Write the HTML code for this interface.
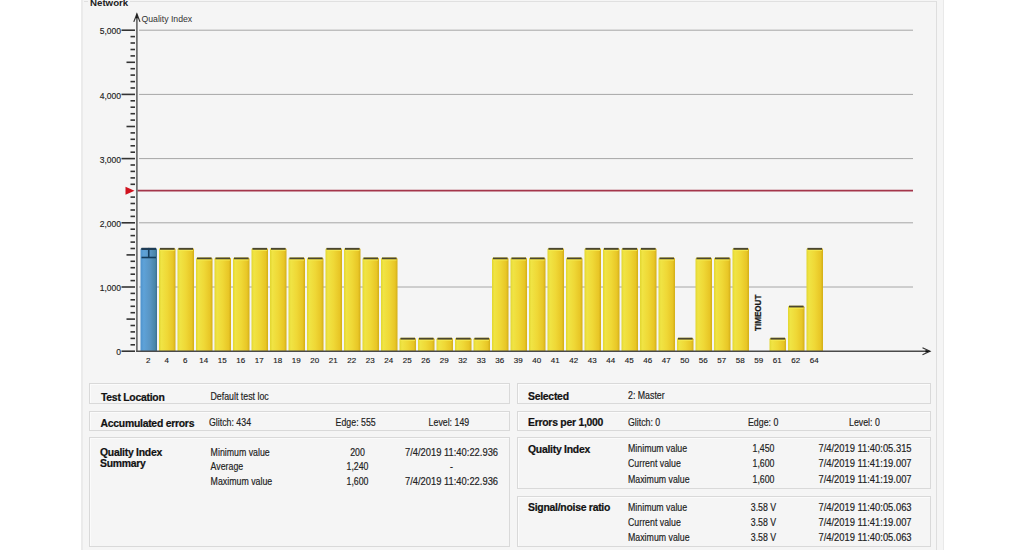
<!DOCTYPE html>
<html><head><meta charset="utf-8"><style>
html,body{margin:0;padding:0;background:#fff;}
body{width:1024px;height:550px;overflow:hidden;position:relative;font-family:"Liberation Sans",sans-serif;}
.panel{position:absolute;left:81px;top:-10px;width:863px;height:600px;background:#f5f5f5;border-left:2px solid #ebebeb;border-right:1px solid #e9e9e9;box-sizing:border-box;}
.hline{position:absolute;left:84px;top:1px;width:853px;height:1px;background:#e0e0e0;}
.vline{position:absolute;left:936px;top:1px;width:1px;height:560px;background:#dedede;}
.net{position:absolute;left:88px;top:-3px;padding:0 2px;background:#f5f5f5;font-weight:bold;font-size:9.7px;color:#222;line-height:12px;}
svg{position:absolute;left:0;top:0;}
.yl{font-size:9.7px;fill:#222;stroke:#222;stroke-width:0.15px;}
.xl{font-size:8px;fill:#222;stroke:#222;stroke-width:0.15px;}
.qi{font-size:8.7px;fill:#333;}
.to{font-size:9px;font-weight:bold;fill:#1a1a1a;stroke:#1a1a1a;stroke-width:0.25px;}
.box{position:absolute;box-sizing:border-box;border:1px solid #d9d9d9;box-shadow:inset 1px 1px 0 #fbfbfb;}
.t{position:absolute;white-space:nowrap;line-height:0;color:#222;}
.t.n{font-size:8.8px;-webkit-text-stroke:0.15px #222;transform:scaleY(1.15);transform-origin:0 3.05px;}
.t.d{font-size:9.4px;-webkit-text-stroke:0.15px #222;transform:scaleY(1.08);transform-origin:0 3.26px;}
.t.b{font-size:10.4px;font-weight:bold;color:#111;letter-spacing:-0.25px;-webkit-text-stroke:0.2px #111;}
.t.c{width:200px;text-align:center;}
</style></head><body>
<div class="panel"></div>
<div class="hline"></div>
<div class="vline"></div>
<div class="net">Network</div>
<svg width="1024" height="550" viewBox="0 0 1024 550">
<defs><linearGradient id="gy" x1="0" x2="1" y1="0" y2="0"><stop offset="0" stop-color="#e2d630"/><stop offset="0.15" stop-color="#f0e444"/><stop offset="0.5" stop-color="#efd836"/><stop offset="0.85" stop-color="#e8c626"/><stop offset="1" stop-color="#d2ae18"/></linearGradient><linearGradient id="gb" x1="0" x2="1" y1="0" y2="0"><stop offset="0" stop-color="#4e92cc"/><stop offset="0.2" stop-color="#5ea2d8"/><stop offset="0.6" stop-color="#5894c2"/><stop offset="0.88" stop-color="#4a86a8"/><stop offset="1" stop-color="#3c6e90"/></linearGradient></defs>
<line x1="139" x2="913" y1="287.0" y2="287.0" stroke="#a6a6a6" stroke-width="1"/>
<line x1="139" x2="913" y1="222.8" y2="222.8" stroke="#a6a6a6" stroke-width="1"/>
<line x1="139" x2="913" y1="158.6" y2="158.6" stroke="#a6a6a6" stroke-width="1"/>
<line x1="139" x2="913" y1="94.4" y2="94.4" stroke="#a6a6a6" stroke-width="1"/>
<line x1="139" x2="913" y1="30.2" y2="30.2" stroke="#a6a6a6" stroke-width="1"/>
<line x1="137.5" x2="913" y1="190.7" y2="190.7" stroke="#a4354a" stroke-width="1.8"/>
<polygon points="125.5,186.7 134.5,190.7 125.5,194.7" fill="#d0121e"/>
<line x1="121.5" x2="135" y1="351.2" y2="351.2" stroke="#333" stroke-width="1.6"/>
<line x1="130.5" x2="135" y1="344.8" y2="344.8" stroke="#333" stroke-width="1.6"/>
<line x1="130.5" x2="135" y1="338.4" y2="338.4" stroke="#333" stroke-width="1.6"/>
<line x1="130.5" x2="135" y1="331.9" y2="331.9" stroke="#333" stroke-width="1.6"/>
<line x1="130.5" x2="135" y1="325.5" y2="325.5" stroke="#333" stroke-width="1.6"/>
<line x1="126.5" x2="135" y1="319.1" y2="319.1" stroke="#333" stroke-width="1.6"/>
<line x1="130.5" x2="135" y1="312.7" y2="312.7" stroke="#333" stroke-width="1.6"/>
<line x1="130.5" x2="135" y1="306.3" y2="306.3" stroke="#333" stroke-width="1.6"/>
<line x1="130.5" x2="135" y1="299.8" y2="299.8" stroke="#333" stroke-width="1.6"/>
<line x1="130.5" x2="135" y1="293.4" y2="293.4" stroke="#333" stroke-width="1.6"/>
<line x1="121.5" x2="135" y1="287.0" y2="287.0" stroke="#333" stroke-width="1.6"/>
<line x1="130.5" x2="135" y1="280.6" y2="280.6" stroke="#333" stroke-width="1.6"/>
<line x1="130.5" x2="135" y1="274.2" y2="274.2" stroke="#333" stroke-width="1.6"/>
<line x1="130.5" x2="135" y1="267.7" y2="267.7" stroke="#333" stroke-width="1.6"/>
<line x1="130.5" x2="135" y1="261.3" y2="261.3" stroke="#333" stroke-width="1.6"/>
<line x1="126.5" x2="135" y1="254.9" y2="254.9" stroke="#333" stroke-width="1.6"/>
<line x1="130.5" x2="135" y1="248.5" y2="248.5" stroke="#333" stroke-width="1.6"/>
<line x1="130.5" x2="135" y1="242.1" y2="242.1" stroke="#333" stroke-width="1.6"/>
<line x1="130.5" x2="135" y1="235.6" y2="235.6" stroke="#333" stroke-width="1.6"/>
<line x1="130.5" x2="135" y1="229.2" y2="229.2" stroke="#333" stroke-width="1.6"/>
<line x1="121.5" x2="135" y1="222.8" y2="222.8" stroke="#333" stroke-width="1.6"/>
<line x1="130.5" x2="135" y1="216.4" y2="216.4" stroke="#333" stroke-width="1.6"/>
<line x1="130.5" x2="135" y1="210.0" y2="210.0" stroke="#333" stroke-width="1.6"/>
<line x1="130.5" x2="135" y1="203.5" y2="203.5" stroke="#333" stroke-width="1.6"/>
<line x1="130.5" x2="135" y1="197.1" y2="197.1" stroke="#333" stroke-width="1.6"/>
<line x1="130.5" x2="135" y1="184.3" y2="184.3" stroke="#333" stroke-width="1.6"/>
<line x1="130.5" x2="135" y1="177.9" y2="177.9" stroke="#333" stroke-width="1.6"/>
<line x1="130.5" x2="135" y1="171.4" y2="171.4" stroke="#333" stroke-width="1.6"/>
<line x1="130.5" x2="135" y1="165.0" y2="165.0" stroke="#333" stroke-width="1.6"/>
<line x1="121.5" x2="135" y1="158.6" y2="158.6" stroke="#333" stroke-width="1.6"/>
<line x1="130.5" x2="135" y1="152.2" y2="152.2" stroke="#333" stroke-width="1.6"/>
<line x1="130.5" x2="135" y1="145.8" y2="145.8" stroke="#333" stroke-width="1.6"/>
<line x1="130.5" x2="135" y1="139.3" y2="139.3" stroke="#333" stroke-width="1.6"/>
<line x1="130.5" x2="135" y1="132.9" y2="132.9" stroke="#333" stroke-width="1.6"/>
<line x1="126.5" x2="135" y1="126.5" y2="126.5" stroke="#333" stroke-width="1.6"/>
<line x1="130.5" x2="135" y1="120.1" y2="120.1" stroke="#333" stroke-width="1.6"/>
<line x1="130.5" x2="135" y1="113.7" y2="113.7" stroke="#333" stroke-width="1.6"/>
<line x1="130.5" x2="135" y1="107.2" y2="107.2" stroke="#333" stroke-width="1.6"/>
<line x1="130.5" x2="135" y1="100.8" y2="100.8" stroke="#333" stroke-width="1.6"/>
<line x1="121.5" x2="135" y1="94.4" y2="94.4" stroke="#333" stroke-width="1.6"/>
<line x1="130.5" x2="135" y1="88.0" y2="88.0" stroke="#333" stroke-width="1.6"/>
<line x1="130.5" x2="135" y1="81.6" y2="81.6" stroke="#333" stroke-width="1.6"/>
<line x1="130.5" x2="135" y1="75.1" y2="75.1" stroke="#333" stroke-width="1.6"/>
<line x1="130.5" x2="135" y1="68.7" y2="68.7" stroke="#333" stroke-width="1.6"/>
<line x1="126.5" x2="135" y1="62.3" y2="62.3" stroke="#333" stroke-width="1.6"/>
<line x1="130.5" x2="135" y1="55.9" y2="55.9" stroke="#333" stroke-width="1.6"/>
<line x1="130.5" x2="135" y1="49.5" y2="49.5" stroke="#333" stroke-width="1.6"/>
<line x1="130.5" x2="135" y1="43.0" y2="43.0" stroke="#333" stroke-width="1.6"/>
<line x1="130.5" x2="135" y1="36.6" y2="36.6" stroke="#333" stroke-width="1.6"/>
<line x1="121.5" x2="135" y1="30.2" y2="30.2" stroke="#333" stroke-width="1.6"/>
<text transform="translate(121,355.4) scale(0.88,1)" text-anchor="end" class="yl">0</text>
<text transform="translate(121,291.2) scale(0.88,1)" text-anchor="end" class="yl">1,000</text>
<text transform="translate(121,227.0) scale(0.88,1)" text-anchor="end" class="yl">2,000</text>
<text transform="translate(121,162.8) scale(0.88,1)" text-anchor="end" class="yl">3,000</text>
<text transform="translate(121,98.6) scale(0.88,1)" text-anchor="end" class="yl">4,000</text>
<text transform="translate(121,34.4) scale(0.88,1)" text-anchor="end" class="yl">5,000</text>
<path d="M140.50,351.2 V249.38 Q140.50,247.88 142.00,247.88 H155.50 Q157.00,247.88 157.00,249.38 V351.2 Z" fill="url(#gb)"/>
<rect x="141.50" y="247.88" width="14.50" height="2" fill="#4a4630"/>
<text x="148.15" y="362.6" text-anchor="middle" class="xl">2</text>
<path d="M159.00,351.2 V249.38 Q159.00,247.88 160.50,247.88 H174.00 Q175.50,247.88 175.50,249.38 V351.2 Z" fill="url(#gy)"/>
<rect x="160.00" y="247.88" width="14.50" height="2" fill="#4a4630"/>
<rect x="160.00" y="249.88" width="14.50" height="1" fill="#f6ea50"/>
<text x="166.65" y="362.6" text-anchor="middle" class="xl">4</text>
<path d="M177.50,351.2 V249.38 Q177.50,247.88 179.00,247.88 H192.50 Q194.00,247.88 194.00,249.38 V351.2 Z" fill="url(#gy)"/>
<rect x="178.50" y="247.88" width="14.50" height="2" fill="#4a4630"/>
<rect x="178.50" y="249.88" width="14.50" height="1" fill="#f6ea50"/>
<text x="185.15" y="362.6" text-anchor="middle" class="xl">6</text>
<path d="M196.00,351.2 V259.01 Q196.00,257.51 197.50,257.51 H211.00 Q212.50,257.51 212.50,259.01 V351.2 Z" fill="url(#gy)"/>
<rect x="197.00" y="257.51" width="14.50" height="2" fill="#4a4630"/>
<rect x="197.00" y="259.51" width="14.50" height="1" fill="#f6ea50"/>
<text x="203.65" y="362.6" text-anchor="middle" class="xl">14</text>
<path d="M214.50,351.2 V259.01 Q214.50,257.51 216.00,257.51 H229.50 Q231.00,257.51 231.00,259.01 V351.2 Z" fill="url(#gy)"/>
<rect x="215.50" y="257.51" width="14.50" height="2" fill="#4a4630"/>
<rect x="215.50" y="259.51" width="14.50" height="1" fill="#f6ea50"/>
<text x="222.15" y="362.6" text-anchor="middle" class="xl">15</text>
<path d="M233.00,351.2 V259.01 Q233.00,257.51 234.50,257.51 H248.00 Q249.50,257.51 249.50,259.01 V351.2 Z" fill="url(#gy)"/>
<rect x="234.00" y="257.51" width="14.50" height="2" fill="#4a4630"/>
<rect x="234.00" y="259.51" width="14.50" height="1" fill="#f6ea50"/>
<text x="240.65" y="362.6" text-anchor="middle" class="xl">16</text>
<path d="M251.50,351.2 V249.38 Q251.50,247.88 253.00,247.88 H266.50 Q268.00,247.88 268.00,249.38 V351.2 Z" fill="url(#gy)"/>
<rect x="252.50" y="247.88" width="14.50" height="2" fill="#4a4630"/>
<rect x="252.50" y="249.88" width="14.50" height="1" fill="#f6ea50"/>
<text x="259.15" y="362.6" text-anchor="middle" class="xl">17</text>
<path d="M270.00,351.2 V249.38 Q270.00,247.88 271.50,247.88 H285.00 Q286.50,247.88 286.50,249.38 V351.2 Z" fill="url(#gy)"/>
<rect x="271.00" y="247.88" width="14.50" height="2" fill="#4a4630"/>
<rect x="271.00" y="249.88" width="14.50" height="1" fill="#f6ea50"/>
<text x="277.65" y="362.6" text-anchor="middle" class="xl">18</text>
<path d="M288.50,351.2 V259.01 Q288.50,257.51 290.00,257.51 H303.50 Q305.00,257.51 305.00,259.01 V351.2 Z" fill="url(#gy)"/>
<rect x="289.50" y="257.51" width="14.50" height="2" fill="#4a4630"/>
<rect x="289.50" y="259.51" width="14.50" height="1" fill="#f6ea50"/>
<text x="296.15" y="362.6" text-anchor="middle" class="xl">19</text>
<path d="M307.00,351.2 V259.01 Q307.00,257.51 308.50,257.51 H322.00 Q323.50,257.51 323.50,259.01 V351.2 Z" fill="url(#gy)"/>
<rect x="308.00" y="257.51" width="14.50" height="2" fill="#4a4630"/>
<rect x="308.00" y="259.51" width="14.50" height="1" fill="#f6ea50"/>
<text x="314.65" y="362.6" text-anchor="middle" class="xl">20</text>
<path d="M325.50,351.2 V249.38 Q325.50,247.88 327.00,247.88 H340.50 Q342.00,247.88 342.00,249.38 V351.2 Z" fill="url(#gy)"/>
<rect x="326.50" y="247.88" width="14.50" height="2" fill="#4a4630"/>
<rect x="326.50" y="249.88" width="14.50" height="1" fill="#f6ea50"/>
<text x="333.15" y="362.6" text-anchor="middle" class="xl">21</text>
<path d="M344.00,351.2 V249.38 Q344.00,247.88 345.50,247.88 H359.00 Q360.50,247.88 360.50,249.38 V351.2 Z" fill="url(#gy)"/>
<rect x="345.00" y="247.88" width="14.50" height="2" fill="#4a4630"/>
<rect x="345.00" y="249.88" width="14.50" height="1" fill="#f6ea50"/>
<text x="351.65" y="362.6" text-anchor="middle" class="xl">22</text>
<path d="M362.50,351.2 V259.01 Q362.50,257.51 364.00,257.51 H377.50 Q379.00,257.51 379.00,259.01 V351.2 Z" fill="url(#gy)"/>
<rect x="363.50" y="257.51" width="14.50" height="2" fill="#4a4630"/>
<rect x="363.50" y="259.51" width="14.50" height="1" fill="#f6ea50"/>
<text x="370.15" y="362.6" text-anchor="middle" class="xl">23</text>
<path d="M381.00,351.2 V259.01 Q381.00,257.51 382.50,257.51 H396.00 Q397.50,257.51 397.50,259.01 V351.2 Z" fill="url(#gy)"/>
<rect x="382.00" y="257.51" width="14.50" height="2" fill="#4a4630"/>
<rect x="382.00" y="259.51" width="14.50" height="1" fill="#f6ea50"/>
<text x="388.65" y="362.6" text-anchor="middle" class="xl">24</text>
<path d="M399.50,351.2 V339.26 Q399.50,337.76 401.00,337.76 H414.50 Q416.00,337.76 416.00,339.26 V351.2 Z" fill="url(#gy)"/>
<rect x="400.50" y="337.76" width="14.50" height="2" fill="#4a4630"/>
<rect x="400.50" y="339.76" width="14.50" height="1" fill="#f6ea50"/>
<text x="407.15" y="362.6" text-anchor="middle" class="xl">25</text>
<path d="M418.00,351.2 V339.26 Q418.00,337.76 419.50,337.76 H433.00 Q434.50,337.76 434.50,339.26 V351.2 Z" fill="url(#gy)"/>
<rect x="419.00" y="337.76" width="14.50" height="2" fill="#4a4630"/>
<rect x="419.00" y="339.76" width="14.50" height="1" fill="#f6ea50"/>
<text x="425.65" y="362.6" text-anchor="middle" class="xl">26</text>
<path d="M436.50,351.2 V339.26 Q436.50,337.76 438.00,337.76 H451.50 Q453.00,337.76 453.00,339.26 V351.2 Z" fill="url(#gy)"/>
<rect x="437.50" y="337.76" width="14.50" height="2" fill="#4a4630"/>
<rect x="437.50" y="339.76" width="14.50" height="1" fill="#f6ea50"/>
<text x="444.15" y="362.6" text-anchor="middle" class="xl">29</text>
<path d="M455.00,351.2 V339.26 Q455.00,337.76 456.50,337.76 H470.00 Q471.50,337.76 471.50,339.26 V351.2 Z" fill="url(#gy)"/>
<rect x="456.00" y="337.76" width="14.50" height="2" fill="#4a4630"/>
<rect x="456.00" y="339.76" width="14.50" height="1" fill="#f6ea50"/>
<text x="462.65" y="362.6" text-anchor="middle" class="xl">32</text>
<path d="M473.50,351.2 V339.26 Q473.50,337.76 475.00,337.76 H488.50 Q490.00,337.76 490.00,339.26 V351.2 Z" fill="url(#gy)"/>
<rect x="474.50" y="337.76" width="14.50" height="2" fill="#4a4630"/>
<rect x="474.50" y="339.76" width="14.50" height="1" fill="#f6ea50"/>
<text x="481.15" y="362.6" text-anchor="middle" class="xl">33</text>
<path d="M492.00,351.2 V259.01 Q492.00,257.51 493.50,257.51 H507.00 Q508.50,257.51 508.50,259.01 V351.2 Z" fill="url(#gy)"/>
<rect x="493.00" y="257.51" width="14.50" height="2" fill="#4a4630"/>
<rect x="493.00" y="259.51" width="14.50" height="1" fill="#f6ea50"/>
<text x="499.65" y="362.6" text-anchor="middle" class="xl">36</text>
<path d="M510.50,351.2 V259.01 Q510.50,257.51 512.00,257.51 H525.50 Q527.00,257.51 527.00,259.01 V351.2 Z" fill="url(#gy)"/>
<rect x="511.50" y="257.51" width="14.50" height="2" fill="#4a4630"/>
<rect x="511.50" y="259.51" width="14.50" height="1" fill="#f6ea50"/>
<text x="518.15" y="362.6" text-anchor="middle" class="xl">39</text>
<path d="M529.00,351.2 V259.01 Q529.00,257.51 530.50,257.51 H544.00 Q545.50,257.51 545.50,259.01 V351.2 Z" fill="url(#gy)"/>
<rect x="530.00" y="257.51" width="14.50" height="2" fill="#4a4630"/>
<rect x="530.00" y="259.51" width="14.50" height="1" fill="#f6ea50"/>
<text x="536.65" y="362.6" text-anchor="middle" class="xl">40</text>
<path d="M547.50,351.2 V249.38 Q547.50,247.88 549.00,247.88 H562.50 Q564.00,247.88 564.00,249.38 V351.2 Z" fill="url(#gy)"/>
<rect x="548.50" y="247.88" width="14.50" height="2" fill="#4a4630"/>
<rect x="548.50" y="249.88" width="14.50" height="1" fill="#f6ea50"/>
<text x="555.15" y="362.6" text-anchor="middle" class="xl">41</text>
<path d="M566.00,351.2 V259.01 Q566.00,257.51 567.50,257.51 H581.00 Q582.50,257.51 582.50,259.01 V351.2 Z" fill="url(#gy)"/>
<rect x="567.00" y="257.51" width="14.50" height="2" fill="#4a4630"/>
<rect x="567.00" y="259.51" width="14.50" height="1" fill="#f6ea50"/>
<text x="573.65" y="362.6" text-anchor="middle" class="xl">42</text>
<path d="M584.50,351.2 V249.38 Q584.50,247.88 586.00,247.88 H599.50 Q601.00,247.88 601.00,249.38 V351.2 Z" fill="url(#gy)"/>
<rect x="585.50" y="247.88" width="14.50" height="2" fill="#4a4630"/>
<rect x="585.50" y="249.88" width="14.50" height="1" fill="#f6ea50"/>
<text x="592.15" y="362.6" text-anchor="middle" class="xl">43</text>
<path d="M603.00,351.2 V249.38 Q603.00,247.88 604.50,247.88 H618.00 Q619.50,247.88 619.50,249.38 V351.2 Z" fill="url(#gy)"/>
<rect x="604.00" y="247.88" width="14.50" height="2" fill="#4a4630"/>
<rect x="604.00" y="249.88" width="14.50" height="1" fill="#f6ea50"/>
<text x="610.65" y="362.6" text-anchor="middle" class="xl">44</text>
<path d="M621.50,351.2 V249.38 Q621.50,247.88 623.00,247.88 H636.50 Q638.00,247.88 638.00,249.38 V351.2 Z" fill="url(#gy)"/>
<rect x="622.50" y="247.88" width="14.50" height="2" fill="#4a4630"/>
<rect x="622.50" y="249.88" width="14.50" height="1" fill="#f6ea50"/>
<text x="629.15" y="362.6" text-anchor="middle" class="xl">45</text>
<path d="M640.00,351.2 V249.38 Q640.00,247.88 641.50,247.88 H655.00 Q656.50,247.88 656.50,249.38 V351.2 Z" fill="url(#gy)"/>
<rect x="641.00" y="247.88" width="14.50" height="2" fill="#4a4630"/>
<rect x="641.00" y="249.88" width="14.50" height="1" fill="#f6ea50"/>
<text x="647.65" y="362.6" text-anchor="middle" class="xl">46</text>
<path d="M658.50,351.2 V259.01 Q658.50,257.51 660.00,257.51 H673.50 Q675.00,257.51 675.00,259.01 V351.2 Z" fill="url(#gy)"/>
<rect x="659.50" y="257.51" width="14.50" height="2" fill="#4a4630"/>
<rect x="659.50" y="259.51" width="14.50" height="1" fill="#f6ea50"/>
<text x="666.15" y="362.6" text-anchor="middle" class="xl">47</text>
<path d="M677.00,351.2 V339.26 Q677.00,337.76 678.50,337.76 H692.00 Q693.50,337.76 693.50,339.26 V351.2 Z" fill="url(#gy)"/>
<rect x="678.00" y="337.76" width="14.50" height="2" fill="#4a4630"/>
<rect x="678.00" y="339.76" width="14.50" height="1" fill="#f6ea50"/>
<text x="684.65" y="362.6" text-anchor="middle" class="xl">50</text>
<path d="M695.50,351.2 V259.01 Q695.50,257.51 697.00,257.51 H710.50 Q712.00,257.51 712.00,259.01 V351.2 Z" fill="url(#gy)"/>
<rect x="696.50" y="257.51" width="14.50" height="2" fill="#4a4630"/>
<rect x="696.50" y="259.51" width="14.50" height="1" fill="#f6ea50"/>
<text x="703.15" y="362.6" text-anchor="middle" class="xl">56</text>
<path d="M714.00,351.2 V259.01 Q714.00,257.51 715.50,257.51 H729.00 Q730.50,257.51 730.50,259.01 V351.2 Z" fill="url(#gy)"/>
<rect x="715.00" y="257.51" width="14.50" height="2" fill="#4a4630"/>
<rect x="715.00" y="259.51" width="14.50" height="1" fill="#f6ea50"/>
<text x="721.65" y="362.6" text-anchor="middle" class="xl">57</text>
<path d="M732.50,351.2 V249.38 Q732.50,247.88 734.00,247.88 H747.50 Q749.00,247.88 749.00,249.38 V351.2 Z" fill="url(#gy)"/>
<rect x="733.50" y="247.88" width="14.50" height="2" fill="#4a4630"/>
<rect x="733.50" y="249.88" width="14.50" height="1" fill="#f6ea50"/>
<text x="740.15" y="362.6" text-anchor="middle" class="xl">58</text>
<text x="758.65" y="362.6" text-anchor="middle" class="xl">59</text>
<path d="M769.50,351.2 V339.26 Q769.50,337.76 771.00,337.76 H784.50 Q786.00,337.76 786.00,339.26 V351.2 Z" fill="url(#gy)"/>
<rect x="770.50" y="337.76" width="14.50" height="2" fill="#4a4630"/>
<rect x="770.50" y="339.76" width="14.50" height="1" fill="#f6ea50"/>
<text x="777.15" y="362.6" text-anchor="middle" class="xl">61</text>
<path d="M788.00,351.2 V307.16 Q788.00,305.66 789.50,305.66 H803.00 Q804.50,305.66 804.50,307.16 V351.2 Z" fill="url(#gy)"/>
<rect x="789.00" y="305.66" width="14.50" height="2" fill="#4a4630"/>
<rect x="789.00" y="307.66" width="14.50" height="1" fill="#f6ea50"/>
<text x="795.65" y="362.6" text-anchor="middle" class="xl">62</text>
<path d="M806.50,351.2 V249.38 Q806.50,247.88 808.00,247.88 H821.50 Q823.00,247.88 823.00,249.38 V351.2 Z" fill="url(#gy)"/>
<rect x="807.50" y="247.88" width="14.50" height="2" fill="#4a4630"/>
<rect x="807.50" y="249.88" width="14.50" height="1" fill="#f6ea50"/>
<text x="814.15" y="362.6" text-anchor="middle" class="xl">64</text>
<line x1="141.50" x2="156.00" y1="257.5" y2="257.5" stroke="#143c5c" stroke-width="1.6"/>
<line x1="148.75" x2="148.75" y1="247.9" y2="257.5" stroke="#143c5c" stroke-width="1.6"/>
<rect x="141.50" y="247.88" width="14.50" height="2" fill="#1c3c58"/>
<text class="to" transform="translate(761,331) rotate(-90) scale(0.9,1)">TIMEOUT</text>
<line x1="136.9" x2="136.9" y1="16" y2="351.8" stroke="#5a5a5a" stroke-width="1.5"/>
<path d="M133.8,21.9 L136.9,14 L140,21.9" fill="none" stroke="#333" stroke-width="1.2"/>
<path d="M136.9,12.8 L137.9,18.2 L135.9,18.2 Z" fill="#111"/>
<line x1="136.2" x2="928" y1="351.3" y2="351.3" stroke="#4a4a4a" stroke-width="1.6"/>
<path d="M922.5,347.8 L930,351.3 L922.5,354.8" fill="none" stroke="#333" stroke-width="1.2"/>
<path d="M930.8,351.3 L925.5,350.0 L925.5,352.59999999999997 Z" fill="#111"/>
<text x="141.5" y="22" class="qi">Quality Index</text>
</svg>
<div class="box" style="left:88.7px;top:383px;width:421.3px;height:21px"></div><div class="box" style="left:88.7px;top:410.9px;width:421.3px;height:19.7px"></div><div class="box" style="left:88.7px;top:437.2px;width:421.3px;height:109.5px"></div><div class="box" style="left:516.7px;top:383px;width:414.0999999999999px;height:21px"></div><div class="box" style="left:516.7px;top:410.9px;width:414.0999999999999px;height:19.7px"></div><div class="box" style="left:516.7px;top:437.2px;width:414.0999999999999px;height:51.7px"></div><div class="box" style="left:516.7px;top:496.3px;width:414.0999999999999px;height:50.4px"></div>
<div class="t b" style="left:101px;top:397.6px">Test Location</div><div class="t n" style="left:210.5px;top:396.95px">Default test loc</div><div class="t b" style="left:100.5px;top:423.7px">Accumulated errors</div><div class="t n" style="left:209px;top:422.95px">Glitch: 434</div><div class="t n" style="left:335.6px;top:422.95px">Edge: 555</div><div class="t n" style="left:428.6px;top:422.95px">Level: 149</div><div class="t b" style="left:100px;top:453.3px">Quality Index</div><div class="t b" style="left:100px;top:464.3px">Summary</div><div class="t n" style="left:210.6px;top:452.95px">Minimum value</div><div class="t n c" style="left:257.5px;top:452.95px">200</div><div class="t d c" style="left:351.5px;top:452.74px">7/4/2019 11:40:22.936</div><div class="t n" style="left:210.6px;top:467.45px">Average</div><div class="t n c" style="left:257.5px;top:467.45px">1,240</div><div class="t n c" style="left:351.5px;top:467.45px">-</div><div class="t n" style="left:210.6px;top:481.95px">Maximum value</div><div class="t n c" style="left:257.5px;top:481.95px">1,600</div><div class="t d c" style="left:351.5px;top:481.74px">7/4/2019 11:40:22.936</div><div class="t b" style="left:528px;top:396.9px">Selected</div><div class="t n" style="left:628px;top:395.95px">2: Master</div><div class="t b" style="left:528px;top:423.3px">Errors per 1,000</div><div class="t n" style="left:628px;top:422.95px">Glitch: 0</div><div class="t n" style="left:748px;top:422.95px">Edge: 0</div><div class="t n" style="left:849px;top:422.95px">Level: 0</div><div class="t b" style="left:528px;top:449.9px">Quality Index</div><div class="t n" style="left:628px;top:448.95px">Minimum value</div><div class="t n c" style="left:663.5px;top:448.95px">1,450</div><div class="t d c" style="left:765px;top:448.74px">7/4/2019 11:40:05.315</div><div class="t n" style="left:628px;top:464.45px">Current value</div><div class="t n c" style="left:663.5px;top:464.45px">1,600</div><div class="t d c" style="left:765px;top:464.24px">7/4/2019 11:41:19.007</div><div class="t n" style="left:628px;top:479.95px">Maximum value</div><div class="t n c" style="left:663.5px;top:479.95px">1,600</div><div class="t d c" style="left:765px;top:479.74px">7/4/2019 11:41:19.007</div><div class="t b" style="left:528px;top:508.3px">Signal/noise ratio</div><div class="t n" style="left:628px;top:507.95px">Minimum value</div><div class="t n c" style="left:663.5px;top:507.95px">3.58 V</div><div class="t d c" style="left:765px;top:507.74px">7/4/2019 11:40:05.063</div><div class="t n" style="left:628px;top:522.95px">Current value</div><div class="t n c" style="left:663.5px;top:522.95px">3.58 V</div><div class="t d c" style="left:765px;top:522.74px">7/4/2019 11:41:19.007</div><div class="t n" style="left:628px;top:537.95px">Maximum value</div><div class="t n c" style="left:663.5px;top:537.95px">3.58 V</div><div class="t d c" style="left:765px;top:537.74px">7/4/2019 11:40:05.063</div>
</body></html>
